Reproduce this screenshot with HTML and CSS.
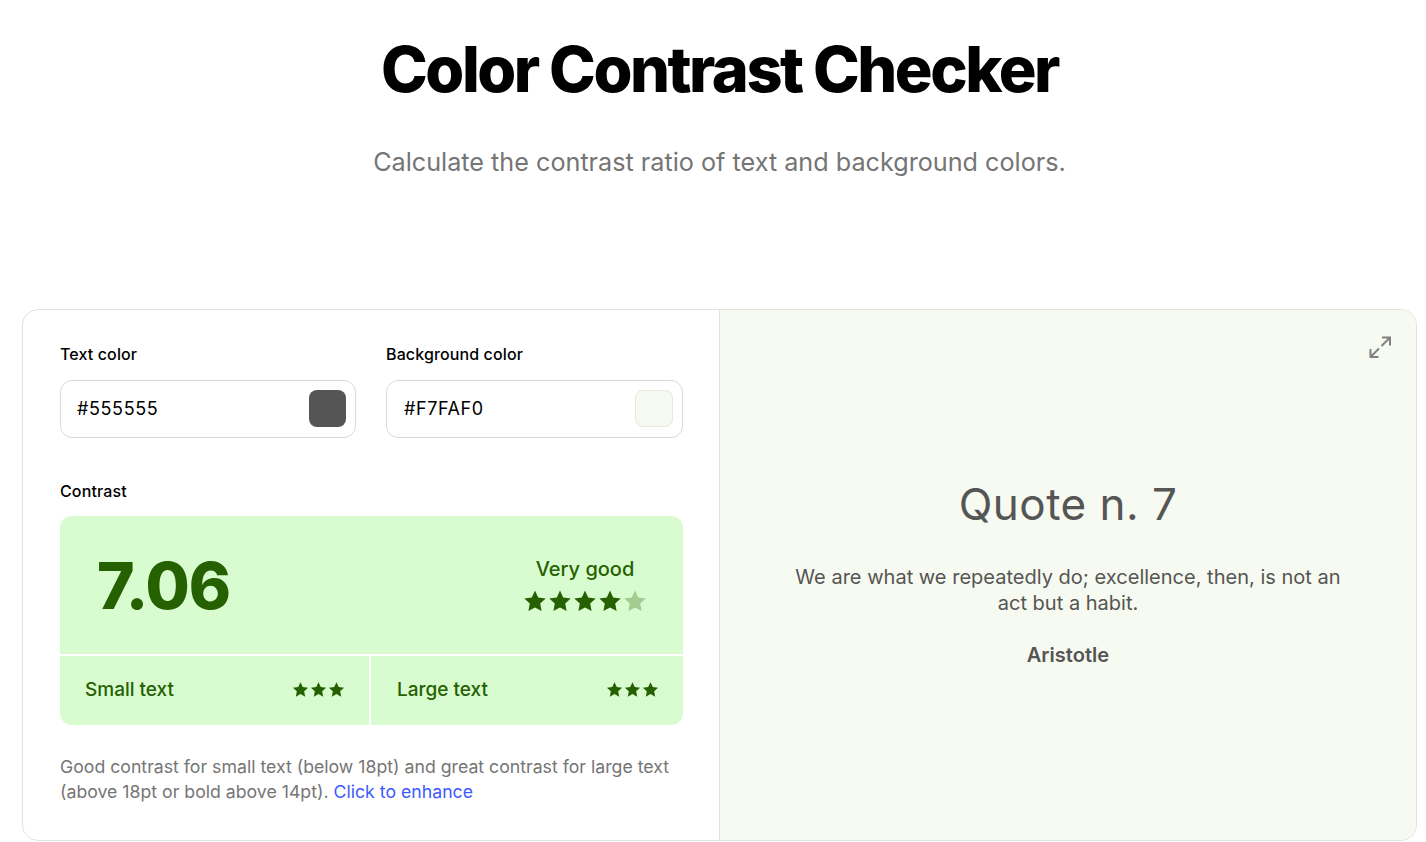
FILE: index.html
```html
<!DOCTYPE html>
<html lang="en">
<head>
<meta charset="utf-8">
<title>Color Contrast Checker</title>
<link rel="stylesheet" href="styles.css">
</head>
<body>
<svg class="defs" width="0" height="0" aria-hidden="true"><defs><path id="star" d="M12 1.600l3.200 6.900 7.500.9-5.500 5.200 1.400 7.500L12 18.400l-6.600 3.700 1.400-7.500L1.300 9.400l7.500-.9z"/></defs></svg>
<header class="hero">
  <h1 class="title">Color Contrast Checker</h1>
  <p class="subtitle">Calculate the contrast ratio of text and background colors.</p>
</header>
<main class="card">
  <section class="controls">
    <div class="fields">
      <div class="field">
        <label class="label">Text color</label>
        <div class="input"><span>#555555</span><span class="swatch swatch-dark"></span></div>
      </div>
      <div class="field">
        <label class="label">Background color</label>
        <div class="input input-bg"><span>#F7FAF0</span><span class="swatch swatch-light"></span></div>
      </div>
    </div>
    <div class="label contrast-label">Contrast</div>
    <div class="score">
      <div class="score-top">
        <div class="ratio">7.06</div>
        <div class="rating">
          <div class="rating-text">Very good</div>
          <div class="stars stars-big">
            <svg viewBox="0 0 24 24"><use href="#star"/></svg>
            <svg viewBox="0 0 24 24"><use href="#star"/></svg>
            <svg viewBox="0 0 24 24"><use href="#star"/></svg>
            <svg viewBox="0 0 24 24"><use href="#star"/></svg>
            <svg viewBox="0 0 24 24" class="dim"><use href="#star"/></svg>
          </div>
        </div>
      </div>
      <div class="score-bottom">
        <div class="size-cell size-small">
          <span>Small text</span>
          <div class="stars stars-small">
            <svg viewBox="0 0 24 24"><use href="#star"/></svg>
            <svg viewBox="0 0 24 24"><use href="#star"/></svg>
            <svg viewBox="0 0 24 24"><use href="#star"/></svg>
          </div>
        </div>
        <div class="size-cell size-large">
          <span>Large text</span>
          <div class="stars stars-small">
            <svg viewBox="0 0 24 24"><use href="#star"/></svg>
            <svg viewBox="0 0 24 24"><use href="#star"/></svg>
            <svg viewBox="0 0 24 24"><use href="#star"/></svg>
          </div>
        </div>
      </div>
    </div>
    <p class="note">Good contrast for small text (below 18pt) and great contrast for large text (above 18pt or bold above 14pt). <a class="link" href="#">Click to enhance</a></p>
  </section>
  <section class="preview">
    <svg class="expand" viewBox="0 0 24 24" width="24" height="24" fill="none" stroke="#808080" stroke-width="2"><path d="M14 2.500h8v8M22 2.500l-8.500 8.500M2.500 14v8h8M2.500 22l8.500-8.500"/></svg>
    <h2 class="quote-title">Quote n. 7</h2>
    <p class="quote-text">We are what we repeatedly do; excellence, then, is not an act but a habit.</p>
    <p class="quote-author">Aristotle</p>
  </section>
</main>
</body>
</html>
```
FILE: styles.css
```css
* { box-sizing: border-box; }
html, body { margin: 0; padding: 0; background: #fff; }
body { font-family: Inter, "Liberation Sans", sans-serif; color: #000; height: 842px; overflow: hidden; padding: 0 9px 0 22px; }
.defs { position: absolute; }
.hero { text-align: center; height: 309px; padding-top: 33px; }
.title { margin: 0; font-size: 63px; line-height: 72px; font-weight: 800; letter-spacing: -2.48px; }
.subtitle { margin: 41px 0 0; font-size: 25.2px; line-height: 32px; color: #757575; font-weight: 400; }
.card { display: flex; height: 532px; border: 1px solid #e2e2e2; border-radius: 16px; overflow: hidden; }
.controls { width: 697px; flex: none; padding: 32px 36px 0 37px; border-right: 1px solid #e2e2e2; }
.fields { display: grid; grid-template-columns: 296px 297px; gap: 30px; }
.label { display: block; font-size: 16px; line-height: 24px; font-weight: 500; letter-spacing: 0.12px; }
.input { margin-top: 14px; height: 58px; border: 1px solid #d9d9d9; border-radius: 12px; display: flex; align-items: center; justify-content: space-between; padding: 0 9px 0 16px; font-size: 18px; line-height: 24px; letter-spacing: 0.6px; }
.input-bg { padding-left: 17px; }
.swatch { width: 37px; height: 37px; border-radius: 8px; margin-top: -1px; }
.swatch-dark { background: #555; }
.swatch-light { width: 38px; background: #f7faf0; border: 1px solid #e6e9e0; }
.contrast-label { margin-top: 41px; }
.score { margin-top: 13px; border-radius: 12px; overflow: hidden; color: #256100; }
.score-top { height: 138px; background: #d9fbd0; display: flex; align-items: center; justify-content: space-between; padding: 0 36px 0 37px; }
.ratio { font-size: 64px; line-height: 72px; font-weight: 800; letter-spacing: -0.9px; margin-top: 2px; }
.rating { text-align: center; margin-top: -2px; }
.rating-text { font-size: 20px; line-height: 28px; font-weight: 500; margin-top: -1px; }
.stars { display: flex; }
.stars svg { fill: #256100; display: block; }
.stars-big { gap: 1px; margin-top: 6px; }
.stars-big svg { width: 24px; height: 24px; }
.stars .dim { opacity: 0.3; }
.stars-small { gap: 1px; }
.stars-small svg { width: 17px; height: 17px; }
.score-bottom { display: flex; height: 69px; margin-top: 2px; gap: 2px; }
.size-cell { background: #d9fbd0; display: flex; align-items: center; justify-content: space-between; font-size: 19px; line-height: 24px; font-weight: 500; padding-bottom: 2px; }
.size-small { width: 309px; padding-left: 25px; padding-right: 24px; }
.size-large { flex: 1; padding-left: 26px; padding-right: 24px; }
.note { margin: 29px 0 0; font-size: 17.7px; line-height: 25px; color: #757575; }
.link { color: #3d5afe; text-decoration: none; }
.preview { flex: 1; position: relative; background: #f7faf0; color: #555; display: flex; flex-direction: column; align-items: center; text-align: center; padding: 166px 72px 0; }
.expand { position: absolute; top: 25px; right: 24px; }
.quote-title { margin: 0; font-size: 44px; line-height: 56px; font-weight: 400; letter-spacing: 0.45px; }
.quote-text { margin: 32px 0 0; font-size: 20.05px; line-height: 26px; }
.quote-author { margin: 26px 0 0; font-size: 20.1px; line-height: 26px; font-weight: 600; }
```
